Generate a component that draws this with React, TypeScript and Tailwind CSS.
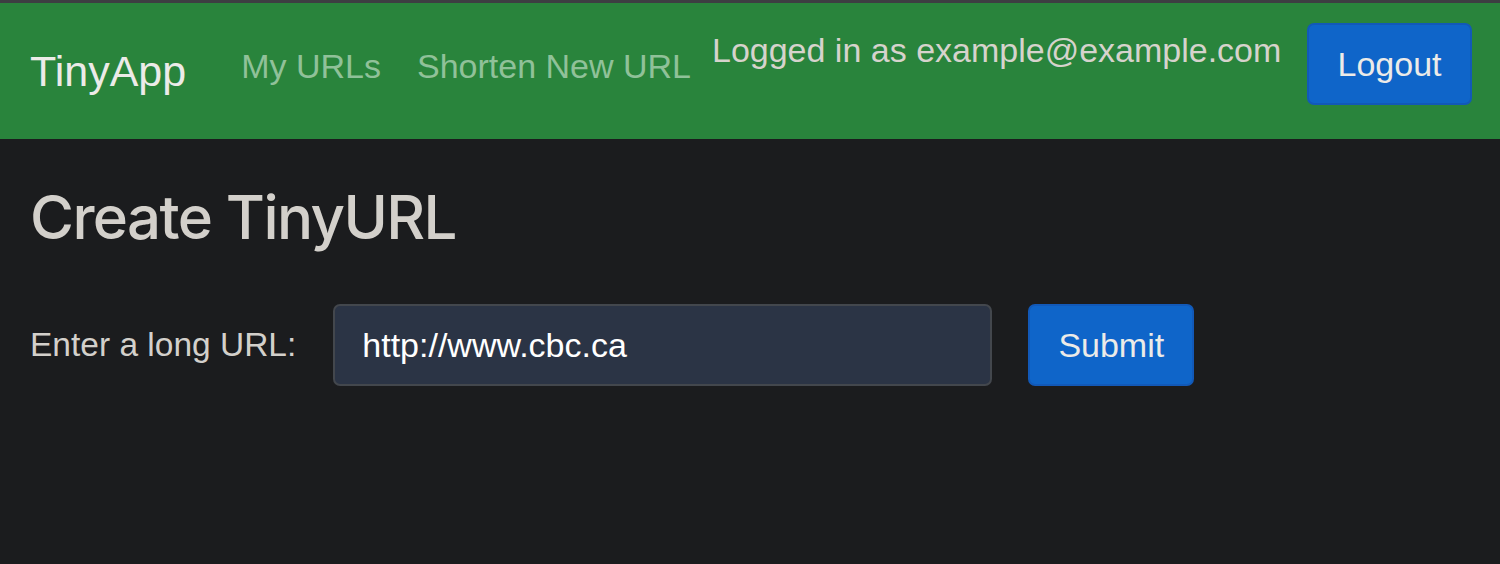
export default function App() {
  return (
    <div className="min-h-[564px] w-[1500px] bg-[#1b1c1e] font-['Liberation_Sans',sans-serif]">
      <div className="h-[3px] bg-[#3d3e42]" />
      <nav className="flex h-[136px] items-center bg-[#29843c] pl-[30px] pr-[28px]">
        <a className="text-[43px] leading-none text-[#ecebe8] mr-[55px]">TinyApp</a>
        <a className="text-[34px] leading-none text-[#90c199] -mt-[10px]">My URLs</a>
        <a className="ml-[36px] text-[34px] leading-none text-[#90c199] -mt-[10px]">Shorten New URL</a>
        <span className="ml-[21px] text-[34px] leading-none text-[#d6d3cc] self-start mt-[30px]">
          Logged in as example@example.com
        </span>
        <button className="ml-auto h-[82px] w-[165px] rounded-[7px] border-2 border-[#1259b8] bg-[#0f65c9] text-[34px] text-[#ecebe8] -mt-[14px]">
          Logout
        </button>
      </nav>
      <main className="px-[30px]">
        <h1 className="mt-[48px] font-['Inter',sans-serif] text-[60px] font-medium leading-none tracking-[-1.6px] text-[#d3d0cb]">
          Create TinyURL
        </h1>
        <form className="mt-[57px] flex items-center">
          <label className="text-[33.5px] text-[#d3d0cb]">Enter a long URL:</label>
          <input
            readOnly
            value="http://www.cbc.ca"
            className="ml-[37px] h-[82px] w-[659px] rounded-[7px] border-2 border-[#43474d] bg-[#2b3445] px-[27px] text-[34px] text-white outline-none"
          />
          <button
            type="button"
            className="ml-[36px] h-[82px] w-[166px] rounded-[7px] border-2 border-[#1259b8] bg-[#0f65c9] text-[34px] text-[#ecebe8]"
          >
            Submit
          </button>
        </form>
      </main>
    </div>
  );
}
